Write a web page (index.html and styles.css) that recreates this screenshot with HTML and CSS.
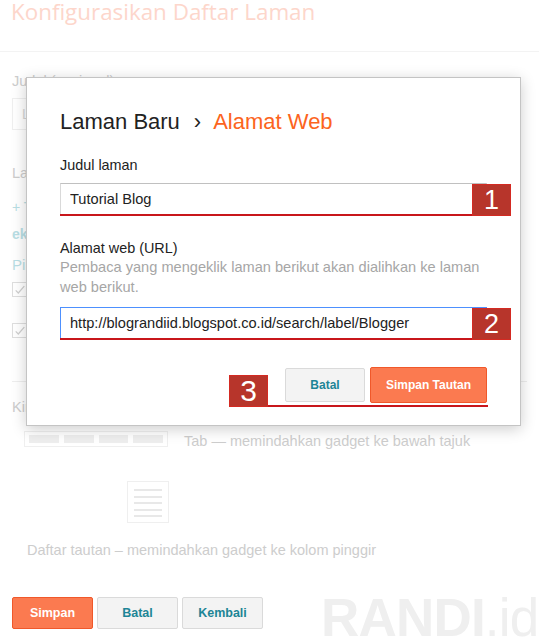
FILE: index.html
```html
<!DOCTYPE html>
<html lang="id">
<head>
<meta charset="utf-8">
<title>Konfigurasikan Daftar Laman</title>
<link rel="stylesheet" href="styles.css">
</head>
<body>
<header class="top">
  <h1 class="page-title">Konfigurasikan Daftar Laman</h1>
</header>

<main class="content">
  <div class="lbl lbl-title">Judul (opsional)</div>
  <div class="fake-input">Laman</div>
  <div class="lbl lbl-pages">Laman yang akan ditampilkan</div>
  <div class="link add">+ Tambahkan tautan</div>
  <div class="link ext">eksternal</div>
  <div class="link pick">Pilih semua</div>
  <div class="check"><span class="box"><svg viewBox="0 0 14 14" width="12" height="12"><path d="M2 7.5l3 3 7-8" fill="none" stroke="#cfcfcf" stroke-width="1.4"/></svg></span>Beranda</div>
  <div class="check check-2"><span class="box"><svg viewBox="0 0 14 14" width="12" height="12"><path d="M2 7.5l3 3 7-8" fill="none" stroke="#cfcfcf" stroke-width="1.4"/></svg></span>Tutorial Blog</div>
  <div class="sep"></div>
  <div class="lbl lbl-view">Kini ditampilkan sebagai</div>
  <div class="opt-tab">
    <div class="tabs"><span></span><span></span><span></span><span></span></div>
    <span class="opt-text">Tab — memindahkan gadget ke bawah tajuk</span>
  </div>
  <div class="opt-list">
    <div class="doc"><span></span><span></span><span></span><span></span><span></span></div>
    <div class="opt-text">Daftar tautan – memindahkan gadget ke kolom pinggir</div>
  </div>
</main>

<footer class="actions">
  <button class="btn btn-primary">Simpan</button>
  <button class="btn btn-secondary">Batal</button>
  <button class="btn btn-secondary">Kembali</button>
  <div class="watermark"><b>RANDI</b>.id</div>
</footer>

<div class="dialog">
  <h2 class="dlg-title">Laman Baru<span class="crumb">›</span><span class="accent">Alamat Web</span></h2>
  <label class="dlg-label lbl-a">Judul laman</label>
  <div class="field">
    <input class="text" type="text" value="Tutorial Blog">
    <span class="mark"></span>
    <span class="badge">1</span>
  </div>
  <label class="dlg-label lbl-b">Alamat web (URL)</label>
  <p class="hint">Pembaca yang mengeklik laman berikut akan dialihkan ke laman web berikut.</p>
  <div class="field field-2">
    <input class="text focus" type="text" value="http://blograndiid.blogspot.co.id/search/label/Blogger">
    <span class="mark"></span>
    <span class="badge">2</span>
  </div>
  <div class="dlg-actions">
    <span class="badge badge-3">3</span>
    <span class="mark mark-3"></span>
    <button class="dbtn dbtn-secondary">Batal</button>
    <button class="dbtn dbtn-primary">Simpan Tautan</button>
  </div>
</div>
</body>
</html>
```
FILE: styles.css
```css
html, body {
  margin: 0;
  padding: 0;
  overflow: hidden;
  background: #fff;
}
body {
  width: 539px;
  height: 640px;
  position: relative;
  font-family: Arial, "Liberation Sans", sans-serif;
}

/* header */
.top {
  height: 51px;
  border-bottom: 1px solid #f3f3f3;
  padding: 0 12px 0 11px;
}
.page-title {
  margin: 0;
  font: 400 22.4px/24px "Open Sans", sans-serif;
  color: #fdd6cb;
}

/* faded background content */
.content {
  padding: 0 12px;
}
.lbl {
  font-size: 14.5px;
  line-height: 18px;
  color: #cdcdcd;
}
.lbl-title { margin-top: 20px; }
.fake-input {
  margin-top: 8px;
  width: 480px;
  height: 32px;
  box-sizing: border-box;
  border: 1px solid #efefef;
  padding-left: 9px;
  line-height: 30px;
  font-size: 14px;
  color: #d6d6d6;
}
.lbl-pages { margin-top: 34px; }
.link {
  color: #b9dee4;
  font-size: 14px;
  line-height: 18px;
}
.add { margin-top: 16px; }
.ext { margin-top: 9px; font-weight: bold; }
.pick { margin-top: 12px; font-size: 15px; line-height: 20px; }
.check {
  margin-top: 7px;
  display: flex;
  align-items: center;
  gap: 8px;
  height: 15px;
  font-size: 14px;
  color: #cdcdcd;
}
.check-2 { margin-top: 26px; }
.box {
  width: 15px;
  height: 15px;
  box-sizing: border-box;
  border: 1px solid #dedede;
  display: flex;
  align-items: center;
  justify-content: center;
}
.sep {
  margin-top: 43px;
  height: 1px;
  background: #eeeeee;
}
.lbl-view { margin-top: 16px; }
.opt-tab {
  margin-top: 15px;
  display: flex;
  align-items: flex-start;
}
.tabs {
  margin-left: 12px;
  width: 144px;
  height: 16px;
  box-sizing: border-box;
  border: 1px solid #efefef;
  padding: 3px 4px;
  display: flex;
  gap: 5px;
}
.tabs span {
  flex: 1;
  background: #eeeeee;
}
.opt-text {
  font-size: 14.5px;
  line-height: 18px;
  color: #cdcdcd;
}
.opt-tab .opt-text {
  margin-left: 16px;
  margin-top: 1px;
}
.opt-list { margin-top: 31px; }
.doc {
  margin-left: 115px;
  width: 42px;
  height: 42px;
  box-sizing: border-box;
  border: 1px solid #efefef;
  padding: 7px 6px 0;
  display: flex;
  flex-direction: column;
  gap: 4.5px;
}
.doc span {
  height: 2px;
  background: #e8e8e8;
}
.opt-list .opt-text {
  margin-top: 18px;
  margin-left: 15px;
}

/* bottom actions */
.actions {
  margin-top: 38px;
  padding-left: 12px;
  display: flex;
  align-items: flex-start;
  gap: 4px;
}
.btn {
  flex-shrink: 0;
  width: 81px;
  height: 32px;
  box-sizing: border-box;
  padding: 0;
  border-radius: 2px;
  font: bold 12.5px Arial, "Liberation Sans", sans-serif;
  cursor: pointer;
}
.btn-primary {
  background: #fb7a50;
  border: 1px solid #f0582a;
  color: #fff;
}
.btn-secondary {
  background: #f3f3f3;
  border: 1px solid #dadada;
  color: #1d8596;
}
.watermark {
  flex-shrink: 0;
  margin-left: 54px;
  margin-top: -6px;
  font-size: 53px;
  line-height: 53px;
  letter-spacing: -0.8px;
  color: #efefef;
  white-space: nowrap;
}
.watermark b { font-weight: bold; }

/* dialog */
.dialog {
  position: absolute;
  top: 77px;
  left: 26px;
  width: 495px;
  box-sizing: border-box;
  background: #fff;
  border: 1px solid #c4c4c4;
  padding: 31px 33px 22px;
  box-shadow: 0 3px 14px rgba(0, 0, 0, 0.2);
}
.dlg-title {
  margin: 0;
  font: 400 22px/26px Arial, "Liberation Sans", sans-serif;
  color: #222;
}
.crumb {
  margin: 0 12px 0 14px;
}
.accent {
  color: #fc6420;
}
.dlg-label {
  display: block;
  font-size: 14.4px;
  color: #222;
}
.lbl-a {
  margin-top: 21px;
  line-height: 18px;
}
.field {
  position: relative;
  margin-top: 9px;
}
.text {
  display: block;
  width: 100%;
  height: 32px;
  margin: 0;
  box-sizing: border-box;
  border: 1px solid #d9d9d9;
  border-top-color: #c0c0c0;
  padding: 0 9px;
  font: 14.6px Arial, "Liberation Sans", sans-serif;
  color: #222;
  background: #fff;
  outline: none;
}
.text.focus {
  border-color: #4d90fe;
}
.lbl-b {
  margin-top: 25px;
  line-height: 17px;
}
.hint {
  margin: 0;
  font-size: 14.6px;
  line-height: 20px;
  color: #a6a6a6;
}
.field-2 {
  margin-top: 10px;
}
.mark {
  position: absolute;
  left: 0;
  bottom: -1px;
  width: 412px;
  height: 2px;
  background: #c8161b;
}
.badge {
  position: absolute;
  left: 412px;
  top: 1px;
  width: 39px;
  height: 32px;
  box-sizing: border-box;
  background: #b7352b;
  border: 1px solid #d42a22;
  color: #fff;
  font: 27px Arial, "Liberation Sans", sans-serif;
  line-height: 1;
  display: flex;
  align-items: center;
  justify-content: center;
  z-index: 2;
}
.dlg-actions {
  position: relative;
  margin-top: 28px;
  display: flex;
  justify-content: flex-end;
  align-items: center;
  gap: 5px;
}
.badge-3 {
  top: 8px;
  left: 169px;
  font-size: 30px;
}
.mark-3 {
  top: 38px;
  bottom: auto;
  left: 208px;
  width: 220px;
}
.dbtn {
  box-sizing: border-box;
  padding: 0;
  border-radius: 2px;
  font: bold 12px Arial, "Liberation Sans", sans-serif;
  cursor: pointer;
}
.dbtn-secondary {
  width: 80px;
  height: 34px;
  background: #f3f3f3;
  border: 1px solid #dadada;
  color: #1d8596;
}
.dbtn-primary {
  width: 117px;
  height: 36px;
  background: #fb7a50;
  border: 1px solid #f0582a;
  color: #fff;
}
```
